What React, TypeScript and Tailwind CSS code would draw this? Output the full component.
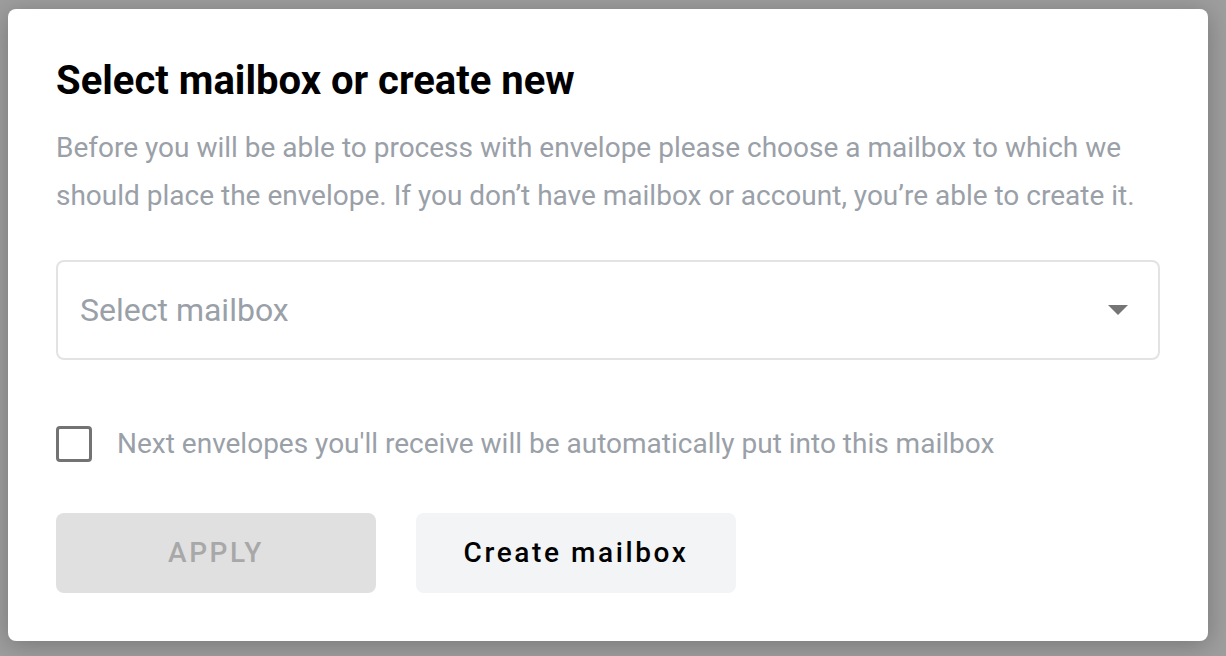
export default function App() {
  return (
    <div className="min-h-screen w-full bg-[#9e9e9e] pt-[9px] pl-[8px]" style={{ fontFamily: "Roboto, 'Liberation Sans', sans-serif" }}>
      <div className="flex h-[632px] w-[1200px] flex-col rounded-[8px] bg-white px-[48px] pt-[48px] shadow-[0_4px_24px_rgba(0,0,0,0.25)]">
        <h1 className="text-[40px] font-bold leading-[48px] text-black">Select mailbox or create new</h1>
        <p className="mt-[19px] text-[28px] leading-[48px] text-[#9aa0a8]">
          Before you will be able to process with envelope please choose a mailbox to which we should place the envelope. If you don’t have mailbox or account, you’re able to create it.
        </p>
        <button className="mt-[40px] flex h-[100px] w-full items-center justify-between rounded-[8px] border-2 border-[#e3e3e3] pl-[22px] pr-[30px] text-left">
          <span className="text-[32px] text-[#9aa0a8]">Select mailbox</span>
          <svg width="20" height="10" viewBox="0 0 20 10">
            <path d="M0 0 L20 0 L10 10 Z" fill="#757575" />
          </svg>
        </button>
        <label className="mt-[66px] flex h-[36px] items-center gap-[25px]">
          <span className="h-[36px] w-[36px] shrink-0 rounded-[4px] border-[3px] border-[#737373]" />
          <span className="text-[28px] leading-[36px] text-[#9aa0a8]">Next envelopes you'll receive will be automatically put into this mailbox</span>
        </label>
        <div className="mt-[51px] flex gap-[40px]">
          <button className="h-[80px] w-[320px] rounded-[8px] bg-[#e0e0e0] text-[28px] font-medium tracking-[2.6px] text-[#a8a8a8]">
            APPLY
          </button>
          <button className="h-[80px] w-[320px] rounded-[8px] bg-[#f3f4f6] text-[28px] font-medium tracking-[2.6px] text-black">
            Create mailbox
          </button>
        </div>
      </div>
    </div>
  )
}
